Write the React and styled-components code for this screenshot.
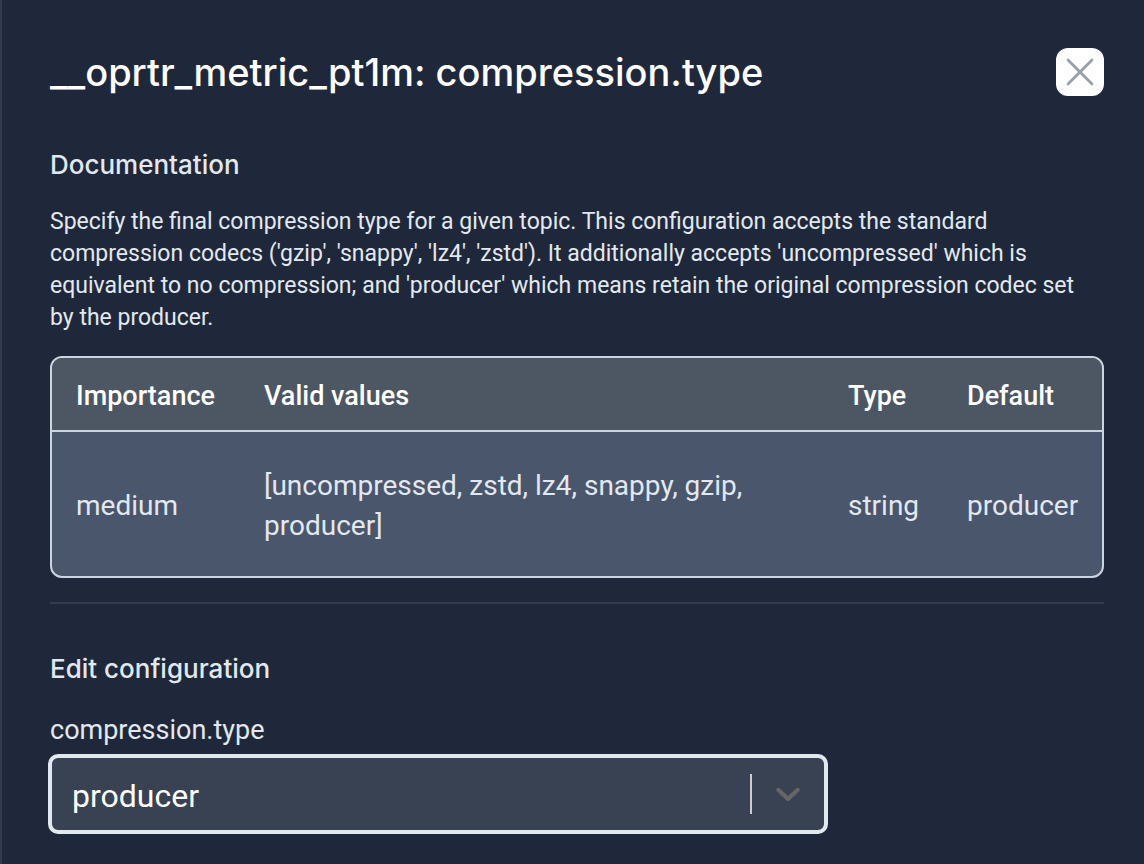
import React, { useState } from "react";
import styled, { createGlobalStyle } from "styled-components";

const codecs = ["uncompressed", "zstd", "lz4", "snappy", "gzip", "producer"];

const App = () => {
	const [value, setValue] = useState("producer");
	return (
		<>
			<GlobalStyle />
			<Panel>
				<Header>
					<Title>__oprtr_metric_pt1m: compression.type</Title>
					<CloseButton type='button' aria-label='Close'>
						<svg width='28' height='28' viewBox='0 0 28 28' fill='none'>
							<path
								d='M2 2L26 26M26 2L2 26'
								stroke='#979fae'
								strokeWidth='2.8'
								strokeLinecap='round'
							/>
						</svg>
					</CloseButton>
				</Header>

				<Documentation>
					<SectionTitle>Documentation</SectionTitle>
					<Description>
						Specify the final compression type for a given topic. This
						configuration accepts the standard compression codecs ('gzip',
						'snappy', 'lz4', 'zstd'). It additionally accepts 'uncompressed'
						which is equivalent to no compression; and 'producer' which means
						retain the original compression codec set by the producer.
					</Description>
					<TableFrame>
						<Table>
							<thead>
								<tr>
									<HeadCell $width='188px'>Importance</HeadCell>
									<HeadCell>Valid values</HeadCell>
									<HeadCell $width='119px'>Type</HeadCell>
									<HeadCell $width='159px'>Default</HeadCell>
								</tr>
							</thead>
							<tbody>
								<tr>
									<Cell>medium</Cell>
									<Cell>{`[${codecs.join(", ")}]`}</Cell>
									<Cell>string</Cell>
									<Cell>producer</Cell>
								</tr>
							</tbody>
						</Table>
					</TableFrame>
				</Documentation>

				<Configuration>
					<SectionTitle>Edit configuration</SectionTitle>
					<Label htmlFor='compression-type'>compression.type</Label>
					<SelectBox>
						<Select
							id='compression-type'
							value={value}
							onChange={(e) => setValue(e.target.value)}>
							{codecs.map((codec) => (
								<option key={codec} value={codec}>
									{codec}
								</option>
							))}
						</Select>
						<Indicator>
							<Separator />
							<svg width='24' height='14' viewBox='0 0 24 14' fill='none'>
								<path
									d='M2.5 3L12 12L21.5 3'
									stroke='#666666'
									strokeWidth='4.4'
									strokeLinecap='round'
									strokeLinejoin='round'
								/>
							</svg>
						</Indicator>
					</SelectBox>
				</Configuration>
			</Panel>
		</>
	);
};

const GlobalStyle = createGlobalStyle`
	* {
		box-sizing: border-box;
	}
	body {
		margin: 0;
		background: #1f283a;
		color: #e2e8f0;
		font-family: Roboto, sans-serif;
	}
	h1, h2, p {
		margin: 0;
	}
`;

const Panel = styled.main`
	min-height: 100vh;
	padding: 48px 40px 30px 48px;
	border-left: 2px solid #333c4e;
`;

const Header = styled.header`
	display: flex;
	align-items: center;
	justify-content: space-between;
	gap: 24px;
	margin-bottom: 53px;
`;

const Title = styled.h1`
	color: #fff;
	font-family: Inter, sans-serif;
	font-size: 38px;
	font-weight: 500;
	line-height: 48px;
`;

const CloseButton = styled.button`
	display: flex;
	flex-shrink: 0;
	align-items: center;
	justify-content: center;
	width: 48px;
	height: 48px;
	padding: 0;
	border: none;
	border-radius: 12px;
	background: #fff;
	cursor: pointer;
`;

const Documentation = styled.section`
	padding-bottom: 24px;
	border-bottom: 2px solid #333c4e;
`;

const SectionTitle = styled.h2`
	font-family: Inter, sans-serif;
	font-size: 26px;
	font-weight: 500;
	line-height: 32px;
	margin-bottom: 24px;
`;

const Description = styled.p`
	padding: 1px 8px 22px 0;
	font-size: 23px;
	line-height: 32px;
`;

const TableFrame = styled.div`
	overflow: hidden;
	border: 2px solid #cbd5e1;
	border-radius: 12px;
	background: #4a566b;
`;

const Table = styled.table`
	width: 100%;
	table-layout: fixed;
	border-collapse: separate;
	border-spacing: 0;
	line-height: 40px;
	text-align: left;
`;

const HeadCell = styled.th`
	width: ${(props) => props.$width || "auto"};
	padding: 18px 24px 14px;
	border-bottom: 2px solid #cbd5e1;
	background: #4d5663;
	color: #fff;
	font-size: 27px;
	font-weight: 500;
`;

const Cell = styled.td`
	padding: 34px 24px 30px;
	font-size: 28px;
`;

const Configuration = styled.section`
	padding-top: 49px;
`;

const Label = styled.label`
	display: block;
	font-size: 27px;
	line-height: 42px;
`;

const SelectBox = styled.div`
	display: grid;
	width: 74%;
	margin: 3px 0 0 -2px;
`;

const Select = styled.select`
	grid-area: 1 / 1;
	width: 100%;
	height: 80px;
	padding: 4px 96px 0 20px;
	appearance: none;
	border: 4px solid #e2e8f0;
	border-radius: 10px;
	background: #394252;
	color: #fff;
	font-family: inherit;
	font-size: 32px;
	outline: none;
`;

const Indicator = styled.span`
	display: flex;
	grid-area: 1 / 1;
	align-items: center;
	justify-self: end;
	gap: 24px;
	padding-right: 28px;
	z-index: 1;
	pointer-events: none;
`;

const Separator = styled.span`
	width: 2px;
	height: 40px;
	background: #ccc;
`;

export default App;
